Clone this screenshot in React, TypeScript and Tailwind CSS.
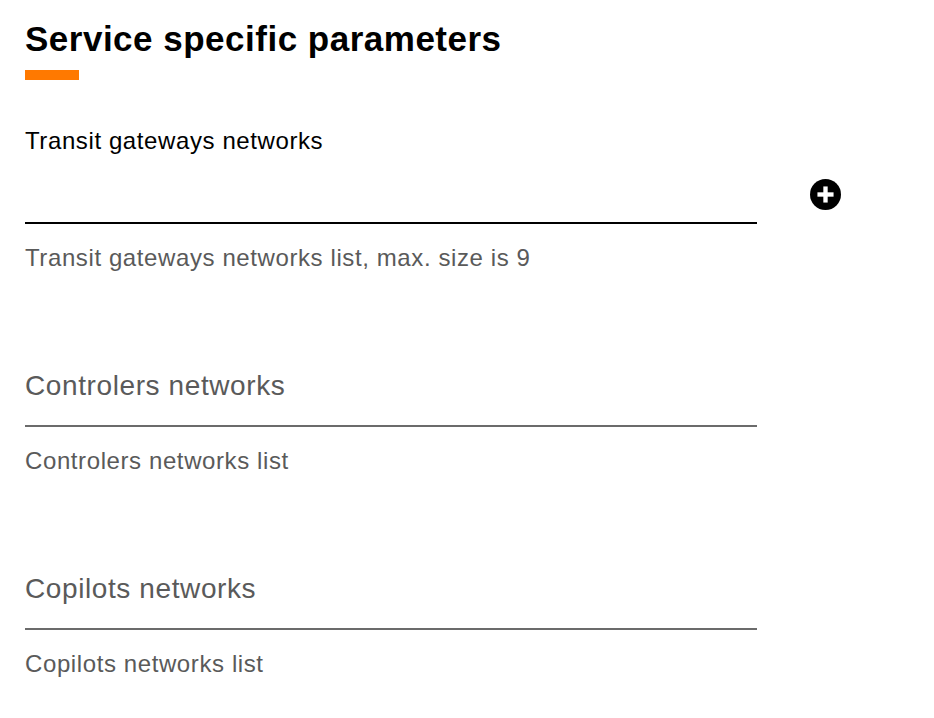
import React from "react";

const font = { fontFamily: '"Liberation Sans", Arial, Helvetica, sans-serif' };

function PlusCircle() {
  return (
    <svg width="31" height="31" viewBox="0 0 30 30" aria-hidden="true">
      <circle cx="15" cy="15" r="15" fill="#000" />
      <rect x="12.9" y="7.2" width="4.2" height="15.6" fill="#fff" />
      <rect x="7.2" y="12.9" width="15.6" height="4.2" fill="#fff" />
    </svg>
  );
}

type FieldProps = {
  label: string;
  helper: string;
  active?: boolean;
  withAdd?: boolean;
};

function Field({ label, helper, active, withAdd }: FieldProps) {
  return (
    <div className="pb-[58px]">
      <div className="flex items-end">
        <div className="w-[732px]">
          <div className="h-[28px] text-[24px] leading-[28px] tracking-[0.6px] text-black">
            {active ? label : ""}
          </div>
          <div
            className={
              "h-[69px] pt-[12px] border-b-2 " +
              (active ? "border-black" : "border-[#6b6b6b]")
            }
          >
            {!active && (
              <div className="text-[28px] leading-[32px] tracking-[0.6px] text-[#5a5a5a]">
                {label}
              </div>
            )}
          </div>
        </div>
        {withAdd && (
          <div className="ml-[53px] mb-[14px]">
            <PlusCircle />
          </div>
        )}
      </div>
      <div className="mt-[20px] h-[28px] text-[24px] leading-[28px] tracking-[0.6px] text-[#5a5a5a]">
        {helper}
      </div>
    </div>
  );
}

export default function App() {
  return (
    <div className="min-h-[718px] w-[934px] bg-white pl-[25px] pt-[19px]" style={font}>
      <h1 className="text-[35px] leading-[40px] font-bold tracking-[0.5px] text-black">
        Service specific parameters
      </h1>
      <div className="mt-[11px] h-[10px] w-[54px] bg-[#ff7900]" />
      <div className="mt-[47px]">
        <Field
          label="Transit gateways networks"
          helper="Transit gateways networks list, max. size is 9"
          active
          withAdd
        />
        <Field label="Controlers networks" helper="Controlers networks list" />
        <Field label="Copilots networks" helper="Copilots networks list" />
      </div>
    </div>
  );
}
